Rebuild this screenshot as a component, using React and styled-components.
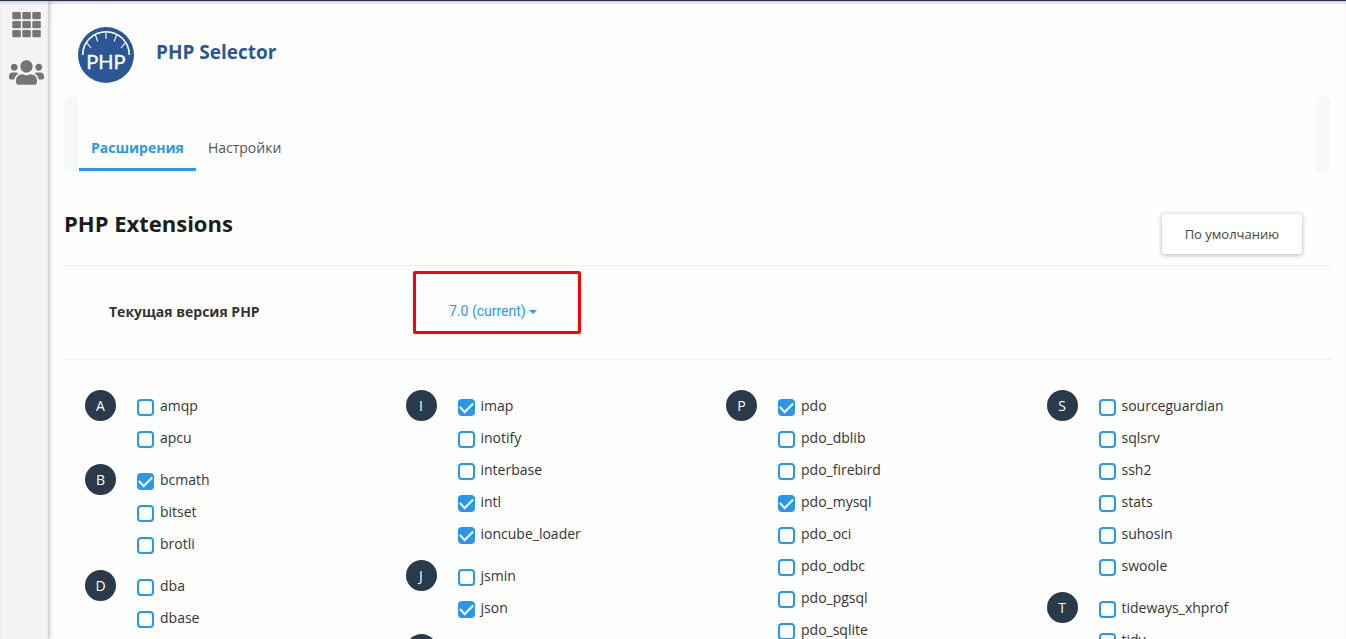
import React, { useState } from "react";
import styled, { createGlobalStyle } from "styled-components";
import { FaUsers } from "react-icons/fa";

const GlobalStyle = createGlobalStyle`
  * {
    box-sizing: border-box;
  }

  body {
    margin: 0;
    background: #fefefe;
    color: #333;
    font-family: "Open Sans", sans-serif;
    font-size: 14px;
    line-height: 20px;
  }
`;

const Page = styled.div`
  display: flex;
  height: 100vh;
  overflow: hidden;
  border-top: 1px solid #24344b;
  box-shadow: inset 0 3px 3px -1px rgba(0, 0, 0, 0.2);
`;

const Sidebar = styled.nav`
  display: flex;
  flex-direction: column;
  align-items: center;
  gap: 17px;
  flex: none;
  width: 48px;
  padding: 11px 0 0 5px;
  background: #f4f4f4;
  box-shadow: 1px 0 5px rgba(0, 0, 0, 0.3), inset 0 3px 3px -1px rgba(0, 0, 0, 0.15);
`;

const SideLink = styled.a`
  display: flex;
  color: #757575;
`;

const Main = styled.main`
  flex: 1;
  min-width: 0;
  padding: 26px 15px 0 16px;
`;

const Header = styled.header`
  display: flex;
  gap: 22px;
  padding-left: 14px;
`;

const Title = styled.h1`
  margin: 13px 0 0;
  color: #2c5796;
  font-size: 19px;
  font-weight: 700;
  line-height: 24px;
`;

const TabBar = styled.div`
  margin-top: 14px;
  padding: 0 15px;
  border-radius: 6px;
  background: #f7f8fa;
`;

const Tabs = styled.nav`
  display: flex;
  padding-top: 28px;
  background: #fefefe;
`;

const Tab = styled.a`
  padding: 13px 12px 10px;
  border-bottom: 3px solid ${({ $active }) => ($active ? "#2997f0" : "transparent")};
  color: ${({ $active }) => ($active ? "#2997f0" : "#555")};
  font-weight: ${({ $active }) => ($active ? 700 : 400)};
  text-decoration: none;
`;

const SectionHead = styled.div`
  display: flex;
  justify-content: space-between;
  align-items: flex-start;
  margin-top: 37px;
  padding-right: 29px;
`;

const SectionTitle = styled.h2`
  margin: 0;
  color: #1c1c1c;
  font-size: 22px;
  font-weight: 700;
  line-height: 30px;
`;

const Button = styled.button`
  margin-top: 6px;
  padding: 10px 23px;
  border: 0;
  border-radius: 3px;
  background: #fff;
  box-shadow: 0 1px 5px rgba(0, 0, 0, 0.3);
  color: #444;
  font: 13px/20px "Open Sans", sans-serif;
  cursor: pointer;
`;

const VersionRow = styled.div`
  display: flex;
  align-items: center;
  height: 95px;
  margin-top: 11px;
  padding: 0 0 2px 45px;
  border: solid #eee;
  border-width: 1px 0;
`;

const VersionLabel = styled.label`
  flex: none;
  width: 340px;
  font-weight: 700;
`;

const VersionPicker = styled.div`
  display: flex;
  align-items: center;
  gap: 3px;
  position: relative;
  color: #2997f0;

  &::after {
    content: "";
    position: absolute;
    inset: -31px -44px -12px -36px;
    border: 3px solid #f00;
    border-radius: 2px;
    pointer-events: none;
  }
`;

const VersionSelect = styled.select`
  appearance: none;
  padding: 0 0 1px;
  border: 0;
  background: none;
  color: inherit;
  font: 14px/19px Roboto, sans-serif;
  cursor: pointer;
`;

const Columns = styled.div`
  display: grid;
  grid-template-columns: repeat(4, 1fr);
  margin: 30px -15px 0 0;
`;

const Column = styled.div`
  display: flex;
  flex-direction: column;
  gap: 10px;
  padding-left: 21px;
`;

const Group = styled.section`
  display: flex;
  gap: 21px;
`;

const Letter = styled.h3`
  flex: none;
  width: 31px;
  height: 31px;
  margin: 0;
  border-radius: 50%;
  background: #293a4a;
  color: #fff;
  font-size: 14px;
  font-weight: 500;
  line-height: 31px;
  text-align: center;
`;

const Extension = styled.label`
  display: flex;
  align-items: flex-start;
  gap: 6px;
  height: 32px;
  padding-top: 6px;
  cursor: pointer;
`;

const Checkbox = styled.input`
  appearance: none;
  display: grid;
  place-items: center;
  flex: none;
  width: 17px;
  height: 17px;
  margin: 3px 0 0;
  border: 2px solid #2997f0;
  border-radius: 4px;
  background: #fff;

  &:checked {
    background: #2997f0;
  }

  &:checked::after {
    content: "";
    width: 11px;
    height: 6px;
    margin-bottom: 4px;
    border: solid #fff;
    border-width: 0 0 2px 2px;
    transform: rotate(-45deg);
  }
`;

const ENABLED = ["bcmath", "imap", "intl", "ioncube_loader", "json", "pdo", "pdo_mysql"];

const COLUMNS = [
  [
    ["A", ["amqp", "apcu"]],
    ["B", ["bcmath", "bitset", "brotli"]],
    ["D", ["dba", "dbase"]],
  ],
  [
    ["I", ["imap", "inotify", "interbase", "intl", "ioncube_loader"]],
    ["J", ["jsmin", "json"]],
    ["K", []],
  ],
  [
    ["P", ["pdo", "pdo_dblib", "pdo_firebird", "pdo_mysql", "pdo_oci", "pdo_odbc", "pdo_pgsql", "pdo_sqlite"]],
  ],
  [
    ["S", ["sourceguardian", "sqlsrv", "ssh2", "stats", "suhosin", "swoole"]],
    ["T", ["tideways_xhprof", "tidy"]],
  ],
];

const GridIcon = () => (
  <svg width="29" height="26" viewBox="0 0 29 26" fill="currentColor">
    {[0, 9, 18].map((y) =>
      [0, 10, 20].map((x) => <rect key={`${x}-${y}`} x={x + 0.3} y={y} width="8.5" height="7.3" rx="1.3" />)
    )}
  </svg>
);

const Logo = () => (
  <svg width="56" height="56" viewBox="0 0 56 56">
    <circle cx="28" cy="28" r="28" fill="#2c5796" />
    <g fill="none" stroke="#fff">
      <path d="M4.7 28A23.3 23.3 0 0 1 51.3 28" strokeWidth="1.6" />
      <path
        d="M28 4.7v7M17.2 7.5l2.6 7M38.8 7.5l-2.6 7M8.5 15.5l4.5 5.5M47.5 15.5l-4.5 5.5"
        strokeWidth="1.1"
      />
    </g>
    <text
      x="28"
      y="42"
      fill="#fff"
      stroke="#fff"
      strokeWidth="0.3"
      fontFamily="Lato, sans-serif"
      fontSize="20"
      textAnchor="middle"
    >
      PHP
    </text>
  </svg>
);

const ExtensionGroup = ({ letter, names, enabled, onToggle }) => (
  <Group>
    <Letter>{letter}</Letter>
    <div>
      {names.map((name) => (
        <Extension key={name}>
          <Checkbox type="checkbox" checked={enabled.includes(name)} onChange={() => onToggle(name)} />
          {name}
        </Extension>
      ))}
    </div>
  </Group>
);

const App = () => {
  const [enabled, setEnabled] = useState(ENABLED);

  const toggle = (name) =>
    setEnabled(enabled.includes(name) ? enabled.filter((n) => n !== name) : [...enabled, name]);

  return (
    <>
      <GlobalStyle />
      <Page>
        <Sidebar>
          <SideLink href="#home" aria-label="Home">
            <GridIcon />
          </SideLink>
          <SideLink href="#users" aria-label="Users">
            <FaUsers size={35} />
          </SideLink>
        </Sidebar>
        <Main>
          <Header>
            <Logo />
            <Title>PHP Selector</Title>
          </Header>
          <TabBar>
            <Tabs>
              <Tab href="#extensions" $active>
                Расширения
              </Tab>
              <Tab href="#settings">Настройки</Tab>
            </Tabs>
          </TabBar>
          <SectionHead>
            <SectionTitle>PHP Extensions</SectionTitle>
            <Button type="button" onClick={() => setEnabled(ENABLED)}>
              По умолчанию
            </Button>
          </SectionHead>
          <VersionRow>
            <VersionLabel htmlFor="version">Текущая версия PHP</VersionLabel>
            <VersionPicker>
              <VersionSelect id="version">
                <option>7.0 (current)</option>
              </VersionSelect>
              <svg width="8" height="4" viewBox="0 0 8 4" fill="currentColor">
                <path d="M0 0h8L4 4z" />
              </svg>
            </VersionPicker>
          </VersionRow>
          <Columns>
            {COLUMNS.map((groups) => (
              <Column key={groups[0][0]}>
                {groups.map(([letter, names]) => (
                  <ExtensionGroup key={letter} letter={letter} names={names} enabled={enabled} onToggle={toggle} />
                ))}
              </Column>
            ))}
          </Columns>
        </Main>
      </Page>
    </>
  );
};

export default App;
